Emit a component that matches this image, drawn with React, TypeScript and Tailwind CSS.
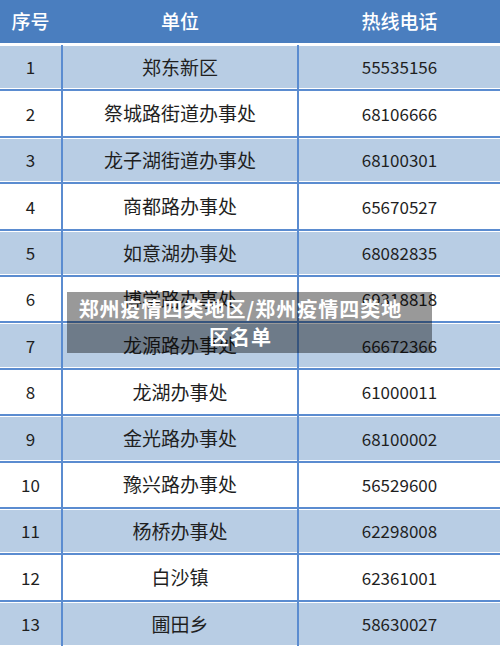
const rows: [string, string, string][] = [
  ['1', '郑东新区', '55535156'],
  ['2', '祭城路街道办事处', '68106666'],
  ['3', '龙子湖街道办事处', '68100301'],
  ['4', '商都路办事处', '65670527'],
  ['5', '如意湖办事处', '68082835'],
  ['6', '博学路办事处', '69318818'],
  ['7', '龙源路办事处', '66672366'],
  ['8', '龙湖办事处', '61000011'],
  ['9', '金光路办事处', '68100002'],
  ['10', '豫兴路办事处', '56529600'],
  ['11', '杨桥办事处', '62298008'],
  ['12', '白沙镇', '62361001'],
  ['13', '圃田乡', '58630027'],
]

export default function App() {
  return (
    <div
      className="relative w-[500px] h-[646px] overflow-hidden bg-white flex flex-col"
      style={{ fontFamily: '"Noto Sans CJK SC", "Noto Sans", sans-serif' }}
    >
      {/* Header */}
      <div className="h-[43px] shrink-0 grid grid-cols-[61px_236px_1fr] bg-[#4a7ebf] text-white text-[19px] font-medium">
        <div className="flex items-center justify-center">序号</div>
        <div className="flex items-center justify-center border-l-2 border-[#4a7ebf]">单位</div>
        <div className="flex items-center justify-center border-l-2 border-[#4a7ebf]">热线电话</div>
      </div>

      {/* Body */}
      <div className="flex-1 flex flex-col border-t-2 border-white">
        {rows.map(([no, name, tel], i) => (
          <div
            key={no}
            className={`flex-1 grid grid-cols-[61px_236px_1fr] text-[#1f1f1f] ${
              i > 0 ? 'border-t-2 border-[#5b8cd0]' : ''
            } ${
              i % 2 === 0
                ? 'bg-[#b8cde4] shadow-[inset_0_1px_0_#fff,inset_0_-1px_0_#fff]'
                : 'bg-white'
            }`}
          >
            <div className="flex items-center justify-center text-[17px]">{no}</div>
            <div className="flex items-center justify-center border-l-2 border-[#5b8cd0] text-[19px]">
              {name}
            </div>
            <div className="flex items-center justify-center border-l-2 border-[#5b8cd0] text-[17px]">
              {tel}
            </div>
          </div>
        ))}
      </div>

      {/* Title overlay */}
      <div className="absolute left-[67px] top-[292px] w-[365px] h-[61px] bg-black/40 pr-[18px] flex items-center justify-center">
        <p className="text-white font-bold text-[20px] leading-[28px] tracking-[1px] text-center whitespace-nowrap">
          郑州疫情四类地区/郑州疫情四类地
          <br />
          区名单
        </p>
      </div>
    </div>
  )
}
